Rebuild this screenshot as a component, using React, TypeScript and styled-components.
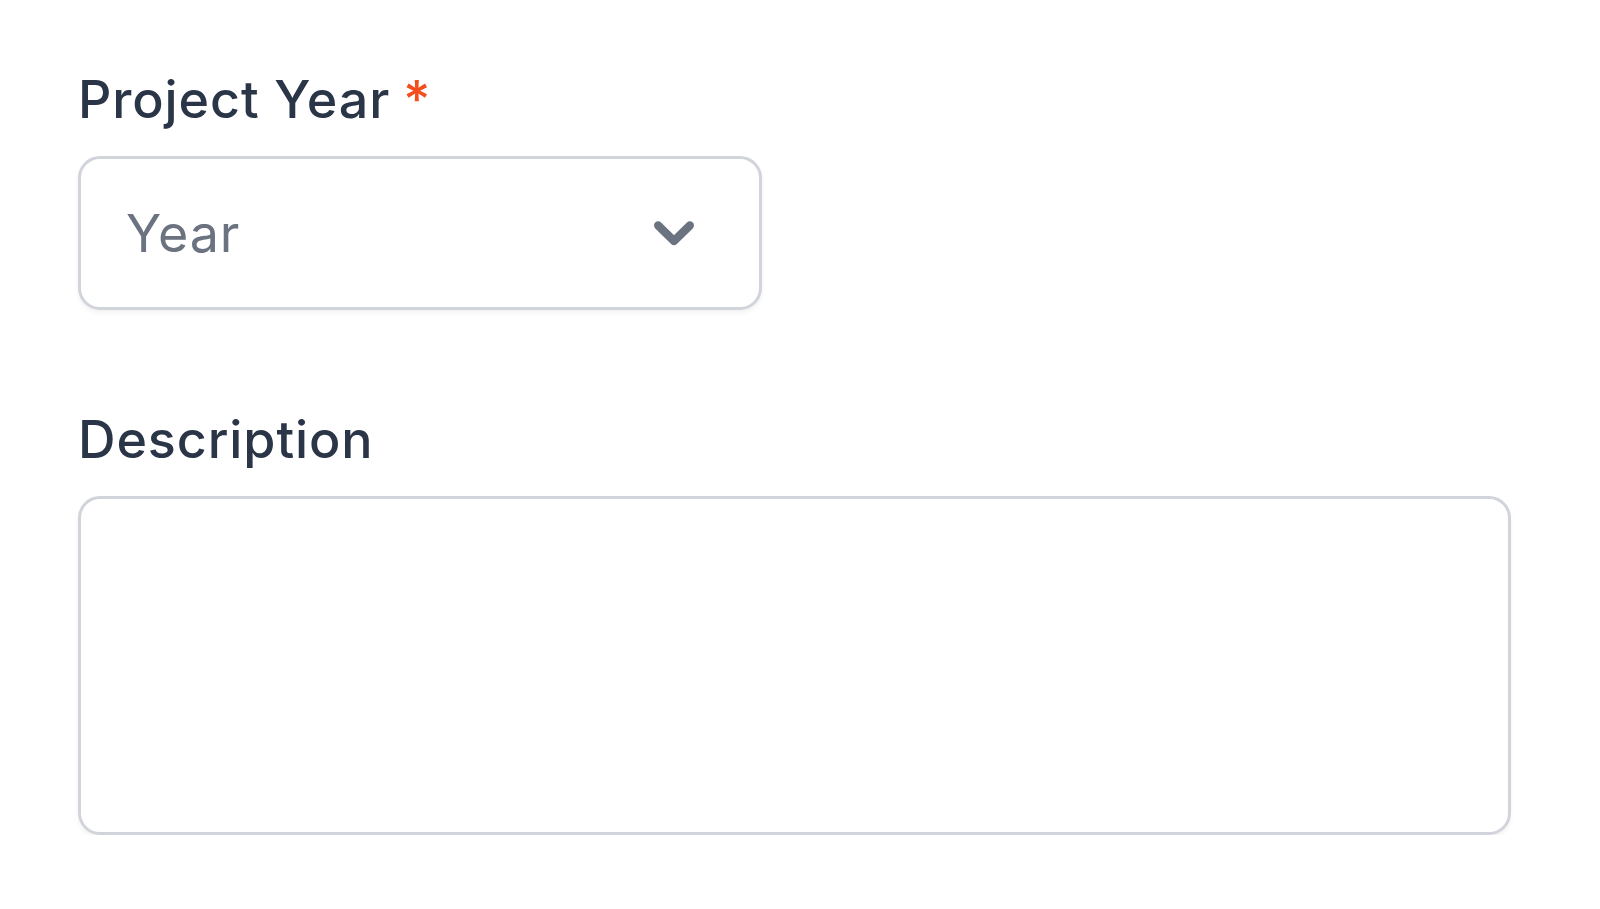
import { createGlobalStyle } from 'styled-components';
import styled from 'styled-components';

const GlobalStyle = createGlobalStyle`
  html, body {
    margin: 0;
    padding: 0;
    background: #ffffff;
    font-family: Inter, "Noto Sans", sans-serif;
  }
`;

const Page = styled.div`
  padding: 64px 89px 0 78px;
  display: flex;
  flex-direction: column;
  gap: 94px;
`;

const Field = styled.div`
  display: flex;
  flex-direction: column;
  gap: 21px;
`;

const Label = styled.label`
  font-size: 52px;
  line-height: 71px;
  font-weight: 500;
  letter-spacing: 0.9px;
  color: #2b3548;
`;

const Required = styled.span`
  color: #f24e1e;
  margin-left: 13px;
`;

const SelectWrap = styled.div`
  position: relative;
  width: 684px;
`;

const Select = styled.select`
  appearance: none;
  width: 100%;
  height: 154px;
  box-sizing: border-box;
  padding: 0 120px 0 45px;
  border: 3px solid #d1d5db;
  border-radius: 22px;
  background: #ffffff;
  box-shadow: 0 3px 4px rgba(0, 0, 0, 0.05);
  font-family: inherit;
  font-size: 52px;
  letter-spacing: 0.8px;
  color: #6b7280;
  outline: none;
`;

const Chevron = styled.svg`
  position: absolute;
  right: 52px;
  top: 50%;
  transform: translateY(-50%);
  width: 72px;
  height: 72px;
  color: #6b7280;
  pointer-events: none;
`;

const TextArea = styled.textarea<{ $height: number }>`
  display: block;
  width: 100%;
  height: ${p => p.$height}px;
  box-sizing: border-box;
  border: 3px solid #d1d5db;
  border-radius: 22px;
  box-shadow: 0 3px 4px rgba(0, 0, 0, 0.05);
  padding: 30px 45px;
  font-family: inherit;
  font-size: 52px;
  resize: none;
  outline: none;
`;

export default function App () {
  return (
    <>
      <GlobalStyle />
      <Page>
        <Field>
          <Label htmlFor="year">
            Project Year<Required>*</Required>
          </Label>
          <SelectWrap>
            <Select id="year" defaultValue="">
              <option value="" disabled>Year</option>
              <option value="2024">2024</option>
              <option value="2023">2023</option>
            </Select>
            <Chevron viewBox="0 0 20 20" fill="none" aria-hidden="true">
              <polyline
                points="5.6 7.9 10 12.2 14.4 7.9"
                stroke="currentColor"
                strokeWidth="2.3"
                strokeLinecap="round"
                strokeLinejoin="round"
              />
            </Chevron>
          </SelectWrap>
        </Field>
        <Field>
          <Label htmlFor="description">Description</Label>
          <TextArea id="description" $height={339} />
        </Field>
      </Page>
    </>
  );
}
